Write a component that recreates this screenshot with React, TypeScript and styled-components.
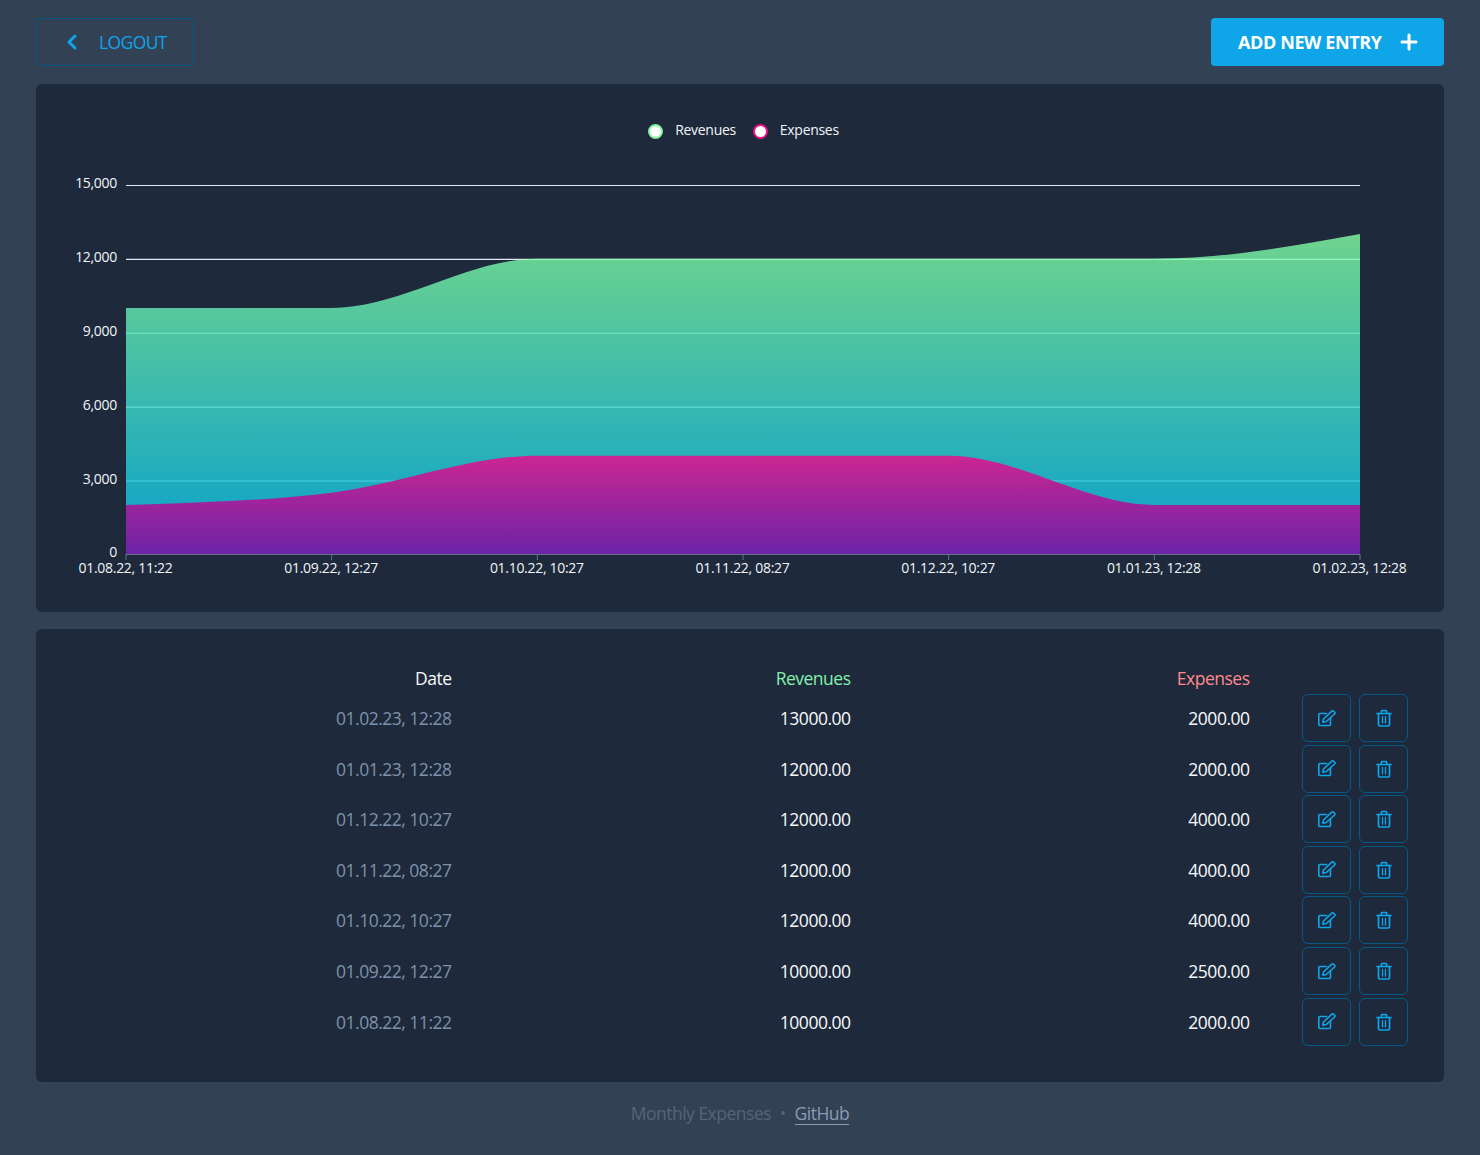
import React from "react";
import styled, { createGlobalStyle } from "styled-components";
import { ChevronLeft, Plus } from "lucide-react";

const FONT = `"Open Sans", "Noto Sans", sans-serif`;

const Global = createGlobalStyle`
  html, body { margin: 0; padding: 0; background: #334155; }
  body { font-family: ${FONT}; }
  * { box-sizing: border-box; }
`;

const Page = styled.div`
  width: 1480px;
  height: 1155px;
  padding: 18px 36px 0;
  background: #334155;
  display: flex;
  flex-direction: column;
`;
const Toolbar = styled.header`
  display: flex;
  justify-content: space-between;
  height: 48px;
  margin-bottom: 18px;
`;
const LogoutButton = styled.button`
  width: 158px;
  height: 48px;
  display: flex;
  align-items: center;
  gap: 15px;
  padding: 0 0 0 23px;
  background: transparent;
  border: 1px solid #075985;
  border-radius: 4px;
  color: #0ea5e9;
  font: 400 17.5px ${FONT};
  letter-spacing: -0.6px;
`;
const AddButton = styled.button`
  width: 233px;
  height: 48px;
  display: flex;
  align-items: center;
  gap: 15px;
  padding: 0 0 0 27px;
  background: #0ea5e9;
  border: 0;
  border-radius: 4px;
  color: #fff;
  font: 700 18px ${FONT};
  letter-spacing: -0.4px;
`;
const Card = styled.section`
  background: #1e293b;
  border-radius: 6px;
`;
const ChartCard = styled(Card)`
  height: 528px;
  margin-bottom: 17px;
  position: relative;
`;
const Legend = styled.div`
  position: absolute;
  top: 34px;
  left: 0;
  right: 0;
  padding-left: 7px;
  height: 22px;
  display: flex;
  justify-content: center;
  align-items: center;
  gap: 17px;
`;
const LegendItem = styled.span`
  display: flex;
  align-items: center;
  gap: 12px;
  color: #f1f5f9;
  font-size: 14px;
  letter-spacing: -0.3px;
`;
const Dot = styled.i<{ $c: string }>`
  width: 15px;
  height: 15px;
  margin-top: 5px;
  border-radius: 50%;
  background: #fff;
  border: 2.5px solid ${(p) => p.$c};
`;
const ChartSvg = styled.svg`
  display: block;
  width: 1408px;
  height: 528px;
`;
const AxisText = styled.text`
  fill: #f1f5f9;
  font: 400 14px ${FONT};
  letter-spacing: -0.3px;
`;
const TableCard = styled(Card)`
  height: 453px;
  padding: 33px 36px 0;
`;
const Table = styled.table`
  width: 1336px;
  border-collapse: collapse;
  table-layout: fixed;
  font-size: 17.5px;
  letter-spacing: -0.5px;
`;
const Col = styled.col<{ $w: number }>`
  width: ${(p) => p.$w}px;
`;
const Head = styled.th<{ $c: string }>`
  height: 31px;
  padding: 0 0.5px 0 0;
  text-align: right;
  font-weight: 400;
  color: ${(p) => p.$c};
`;
const Row = styled.tr`
  height: 50.55px;
`;
const Cell = styled.td<{ $muted?: boolean }>`
  padding: 0 0.5px 0 0;
  text-align: right;
  color: ${(p) => (p.$muted ? "#7f92aa" : "#f8fafc")};
`;
const ActionCell = styled.td`
  padding: 0;
`;
const Actions = styled.div`
  display: flex;
  justify-content: flex-end;
  gap: 8px;
`;
const IconButton = styled.button`
  width: 49px;
  height: 48px;
  display: flex;
  align-items: center;
  justify-content: center;
  padding: 0;
  background: transparent;
  border: 1px solid #075985;
  border-radius: 6px;
  color: #0ea5e9;
`;
const Footer = styled.footer`
  margin-top: 19px;
  display: flex;
  justify-content: center;
  align-items: center;
  gap: 9px;
  font-size: 17.5px;
  letter-spacing: -0.5px;
  color: #566479;
`;
const FooterDot = styled.span`
  font-size: 16px;
`;
const FooterLink = styled.a`
  color: #8a9bb3;
  border-bottom: 1px solid #8a9bb3;
  line-height: 22px;
`;

const EditIcon = () => (
  <svg width="18" height="17" viewBox="0 0 18 17" fill="none" stroke="currentColor" strokeWidth="1.6" strokeLinejoin="round" strokeLinecap="round">
    <path d="M8.5 3.5H1.8a1 1 0 0 0-1 1V14.5a1 1 0 0 0 1 1H11.5a1 1 0 0 0 1-1V8" />
    <path d="M4.8 12.2L5.5 9L13.8 1.2a1.3 1.3 0 0 1 1.9 0l.9.9a1.3 1.3 0 0 1 0 1.9L8.3 11.5Z" />
  </svg>
);
const TrashIcon = () => (
  <svg width="16" height="18" viewBox="0 0 16 18" fill="none" stroke="currentColor" strokeWidth="1.7" strokeLinejoin="round" strokeLinecap="round">
    <path d="M1 4.5H15" />
    <path d="M5 4.5L5.5 2.2a.8.8 0 0 1 .8-.7H9.7a.8.8 0 0 1 .8.7L11 4.5" />
    <path d="M2.5 4.5V15.5a1.5 1.5 0 0 0 1.5 1.5H12a1.5 1.5 0 0 0 1.5-1.5V4.5" />
    <path d="M6.5 7.5V14M9.5 7.5V14" strokeWidth="1.3" />
  </svg>
);

const L = 90;
const R = 1324;
const BASE = 470;
const ZERO = 470.875;
const FILL_ZERO = 470.2;
const SCALE = 0.024625;
const dates = ["01.08.22, 11:22", "01.09.22, 12:27", "01.10.22, 10:27", "01.11.22, 08:27", "01.12.22, 10:27", "01.01.23, 12:28", "01.02.23, 12:28"];
const revenues = [10000, 10000, 12000, 12000, 12000, 12000, 13000];
const expenses = [2000, 2500, 4000, 4000, 4000, 2000, 2000];
const xs = dates.map((_, i) => L + ((R - L) * i) / 6);
const ys = (v: number) => ZERO - v * SCALE;

function monotonePath(values: number[]) {
  const p = values.map((v) => FILL_ZERO - v * SCALE);
  const h = (R - L) / 6;
  const d = p.slice(1).map((y, i) => (y - p[i]) / h);
  const n = p.length;
  const m = p.map(() => 0);
  for (let i = 1; i < n - 1; i++) {
    const a = d[i - 1];
    const b = d[i];
    const avg = (a + b) / 2;
    m[i] = (Math.sign(a) + Math.sign(b)) * Math.min(Math.abs(a), Math.abs(b), 0.5 * Math.abs(avg));
  }
  m[0] = (3 * d[0] - m[1]) / 2;
  m[n - 1] = (3 * d[n - 2] - m[n - 2]) / 2;
  let path = `M${xs[0]} ${BASE}L${xs[0]} ${p[0]}`;
  for (let i = 1; i < n; i++) {
    path += `C${xs[i - 1] + h / 3} ${p[i - 1] + (m[i - 1] * h) / 3} ${xs[i] - h / 3} ${p[i] - (m[i] * h) / 3} ${xs[i]} ${p[i]}`;
  }
  return `${path}L${xs[n - 1]} ${BASE}Z`;
}

const rows = [
  ["01.02.23, 12:28", "13000.00", "2000.00"],
  ["01.01.23, 12:28", "12000.00", "2000.00"],
  ["01.12.22, 10:27", "12000.00", "4000.00"],
  ["01.11.22, 08:27", "12000.00", "4000.00"],
  ["01.10.22, 10:27", "12000.00", "4000.00"],
  ["01.09.22, 12:27", "10000.00", "2500.00"],
  ["01.08.22, 11:22", "10000.00", "2000.00"],
];

export default function App() {
  return (
    <Page>
      <Global />
      <Toolbar>
        <LogoutButton>
          <ChevronLeft size={24} strokeWidth={3} />
          LOGOUT
        </LogoutButton>
        <AddButton>
          ADD NEW ENTRY
          <Plus size={24} strokeWidth={3} />
        </AddButton>
      </Toolbar>
      <ChartCard>
        <Legend>
          <LegendItem>
            <Dot $c="#7cf59c" />
            Revenues
          </LegendItem>
          <LegendItem>
            <Dot $c="#ec0d8a" />
            Expenses
          </LegendItem>
        </Legend>
        <ChartSvg viewBox="0 0 1408 528">
          <defs>
            <linearGradient id="rev" x1="0" y1="150" x2="0" y2="421" gradientUnits="userSpaceOnUse">
              <stop offset="0" stopColor="#83ffa2" stopOpacity="0.8" />
              <stop offset="1" stopColor="#17c8e6" stopOpacity="0.8" />
            </linearGradient>
            <linearGradient id="exp" x1="0" y1="371" x2="0" y2="470" gradientUnits="userSpaceOnUse">
              <stop offset="0" stopColor="#d2208f" stopOpacity="0.96" />
              <stop offset="1" stopColor="#701ea6" stopOpacity="0.96" />
            </linearGradient>
          </defs>
          {[0, 3000, 6000, 9000, 12000, 15000].map((v) => (
            <g key={v}>
              {v > 0 && <line x1={L} x2={R} y1={ys(v)} y2={ys(v)} stroke="#e2e8f0" strokeWidth={v === 15000 ? 1 : 1.2} />}
              <AxisText x={L - 9} y={ys(v) + 2.5} textAnchor="end">
                {v.toLocaleString("en-US")}
              </AxisText>
            </g>
          ))}
          <path d={monotonePath(revenues)} fill="url(#rev)" />
          <path d={monotonePath(expenses)} fill="url(#exp)" />
          <line x1={L} x2={R} y1={BASE + 0.5} y2={BASE + 0.5} stroke="#64748b" />
          {xs.map((x, i) => (
            <g key={x}>
              <line x1={x} x2={x} y1={BASE} y2={BASE + 6} stroke="#64748b" />
              <AxisText x={x - 0.5} y={489} textAnchor="middle">
                {dates[i]}
              </AxisText>
            </g>
          ))}
        </ChartSvg>
      </ChartCard>
      <TableCard>
        <Table>
          <colgroup>
            <Col $w={380} />
            <Col $w={399} />
            <Col $w={399} />
            <Col $w={158} />
          </colgroup>
          <thead>
            <tr>
              <Head $c="#f8fafc">Date</Head>
              <Head $c="#86efac">Revenues</Head>
              <Head $c="#fd8a8a">Expenses</Head>
              <Head $c="#f8fafc" />
            </tr>
          </thead>
          <tbody>
            {rows.map((r) => (
              <Row key={r[0]}>
                <Cell $muted>{r[0]}</Cell>
                <Cell>{r[1]}</Cell>
                <Cell>{r[2]}</Cell>
                <ActionCell>
                  <Actions>
                    <IconButton aria-label="Edit">
                      <EditIcon />
                    </IconButton>
                    <IconButton aria-label="Delete">
                      <TrashIcon />
                    </IconButton>
                  </Actions>
                </ActionCell>
              </Row>
            ))}
          </tbody>
        </Table>
      </TableCard>
      <Footer>
        Monthly Expenses
        <FooterDot>•</FooterDot>
        <FooterLink>GitHub</FooterLink>
      </Footer>
    </Page>
  );
}
